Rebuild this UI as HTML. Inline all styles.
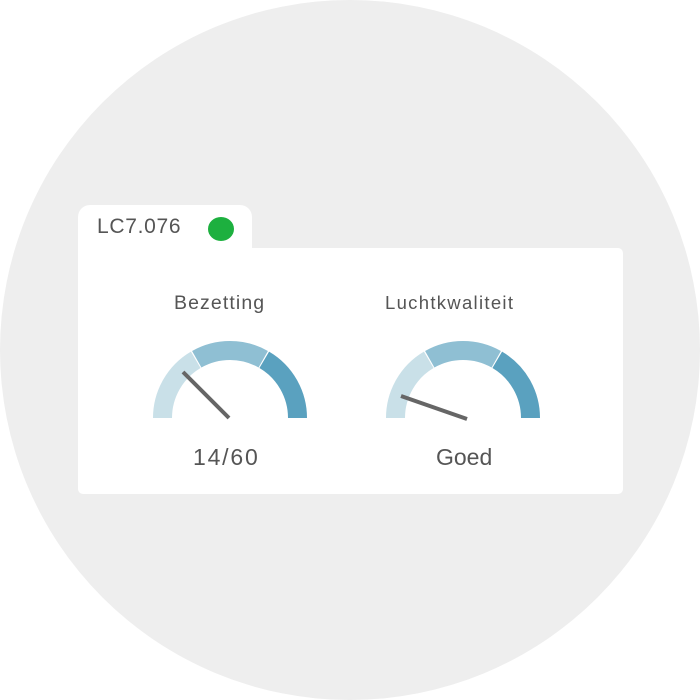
<!DOCTYPE html>
<html><head><style>
body{margin:0;width:700px;height:700px;background:#fff;position:relative;overflow:hidden;font-family:"Liberation Sans",sans-serif;color:#555}
.circ{position:absolute;left:0;top:0;width:700px;height:700px;border-radius:50%;background:#eeeeee}
.tab{position:absolute;left:78px;top:205px;width:174px;height:50px;background:#fff;border-radius:12px 12px 0 0}
.card{position:absolute;left:78px;top:248px;width:545px;height:246px;background:#fff;border-radius:0 5px 5px 5px}
.t{position:absolute;white-space:nowrap}
</style></head><body>
<div class="circ"></div>
<div class="tab"></div>
<div class="card"></div>
<div class="t" style="left:97px;top:215px;font-size:21px;letter-spacing:0.7px">LC7.076</div>
<div style="position:absolute;left:208px;top:217px;width:26px;height:24px;border-radius:50%;background:#1db03f"></div>
<div class="t" style="left:174px;top:292px;font-size:19.5px;letter-spacing:1.1px">Bezetting</div>
<div class="t" style="left:385px;top:292px;font-size:18.5px;letter-spacing:1.3px">Luchtkwaliteit</div>
<div class="t" style="left:193px;top:444px;font-size:23px;letter-spacing:1.8px">14/60</div>
<div class="t" style="left:436px;top:444px;font-size:23px;">Goed</div>
<svg width="700" height="700" style="position:absolute;left:0;top:0">
<g transform="translate(230,418)" fill="none" stroke-width="19">
<path d="M-67.5 0 A67.5 67.5 0 0 1 -34.26 -58.16" stroke="#c9e0e8"/>
<path d="M-33.24 -58.75 A67.5 67.5 0 0 1 33.24 -58.75" stroke="#8fbfd3"/>
<path d="M34.26 -58.16 A67.5 67.5 0 0 1 67.5 0" stroke="#5aa1bf"/>
<line x1="-47" y1="-46" x2="-1" y2="0" stroke="#666" stroke-width="4"/>
</g>
<g transform="translate(463,418)" fill="none" stroke-width="19">
<path d="M-67.5 0 A67.5 67.5 0 0 1 -34.26 -58.16" stroke="#c9e0e8"/>
<path d="M-33.24 -58.75 A67.5 67.5 0 0 1 33.24 -58.75" stroke="#8fbfd3"/>
<path d="M34.26 -58.16 A67.5 67.5 0 0 1 67.5 0" stroke="#5aa1bf"/>
<line x1="-62" y1="-22" x2="4" y2="1" stroke="#666" stroke-width="4"/>
</g>
</svg>
</body></html>
